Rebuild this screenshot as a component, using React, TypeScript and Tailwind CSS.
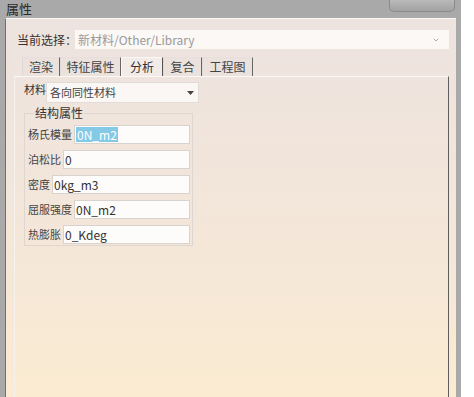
import { ChevronDown } from 'lucide-react';

const font = 'font-["Microsoft_YaHei","Noto_Sans_CJK_SC",sans-serif]';

const tabs = [
  { label: '渲染', w: 'w-[38px]' },
  { label: '特征属性', w: 'w-[61px]' },
  { label: '分析', w: 'w-[42px]', active: true },
  { label: '复合', w: 'w-[39px]' },
  { label: '工程图', w: 'w-[51px]' },
];

const props = [
  { label: '杨氏模量', value: '0N_m2', selected: true },
  { label: '泊松比', value: '0' },
  { label: '密度', value: '0kg_m3' },
  { label: '屈服强度', value: '0N_m2' },
  { label: '热膨胀', value: '0_Kdeg' },
];

function Arrow() {
  return (
    <svg width="7" height="4" viewBox="0 0 7 4" className="shrink-0">
      <path d="M0 0 H7 L3.5 4 Z" fill="#444" />
    </svg>
  );
}

export default function App() {
  return (
    <div className={`flex h-[397px] w-[474px] overflow-hidden bg-white text-[#333] ${font}`}>
      <div className="flex w-[461px] flex-col bg-[#a9a9a9]">
        {/* Title bar */}
        <div className="flex h-[18px] shrink-0 items-start justify-between">
          <span className="pl-[6px] pt-[1px] text-[13px] leading-[16px] text-[#2a2a2a]">属性</span>
          <div className="mr-[6px] h-[12px] w-[66px] rounded-b-[5px] border border-t-0 border-[#8a8a8a] bg-gradient-to-b from-[#b9b9b9] to-[#a2a2a2]" />
        </div>

        {/* Body */}
        <div className="mx-[5px] flex flex-1 flex-col border-l border-t border-l-[#6f6f6f] border-t-[#fbf7f5] bg-gradient-to-b from-[#ede3df] via-[#f3e6da] to-[#faebd1] pl-[8px] pr-[7px]">
          {/* Current selection */}
          <div className="mt-[11px] flex h-[19px] items-center">
            <span className="w-[61px] shrink-0 whitespace-nowrap pl-[3px] text-[12px] text-[#333]">当前选择：</span>
            <div className="flex h-[19px] flex-1 items-center justify-between bg-[#fbf8f6] pl-[3px] pr-[9px]">
              <span className="text-[12px] text-[#9a9a9a]">新材料/Other/Library</span>
              <ChevronDown className="h-[8px] w-[8px] text-[#aaa]" strokeWidth={3} />
            </div>
          </div>

          {/* Tabs */}
          <div className="mt-[8px] flex h-[19px] pl-[8px]">
            {tabs.map((t) => (
              <div
                key={t.label}
                className={`flex ${t.w} items-center justify-center border-l border-r border-t text-[12px] ${
                  t.active
                    ? 'border-l-[#fbf7f5] border-r-[#555] border-t-[#fbf7f5] bg-[#f3ebe7] text-[#333]'
                    : 'border-l-[#e0d8d4] border-r-[#666] border-t-[#e7dfdb] bg-[#ebe2de] text-[#444]'
                }`}
              >
                {t.label}
              </div>
            ))}
          </div>

          {/* Tab panel */}
          <div className="flex flex-1 flex-col border-l border-r border-t border-l-[#f7f1ee] border-r-[#5d5d5d] border-t-[#fbf8f6] pl-[9px]">
            <div className="mt-[5px] flex h-[21px] items-start">
              <span className="pt-[1px] text-[11px] leading-[13px] text-[#333]">材料</span>
              <div className="flex h-[21px] w-[153px] items-center justify-between border border-[#e2dcd8] bg-[#faf7f5] pl-[3px] pr-[4px]">
                <span className="text-[11px] text-[#444]">各向同性材料</span>
                <Arrow />
              </div>
            </div>

            <fieldset className="mt-[3px] w-[169px] border border-[#ddd6d1] pb-[1px] pl-[3px] pr-[2px]">
              <legend className="ml-[6px] px-[1px] text-[12px] leading-[14px] text-[#333]">结构属性</legend>
              <div className="mt-[5px] flex flex-col gap-[6px]">
                {props.map((p) => (
                  <div key={p.label} className="flex h-[19px] items-center gap-[2px]">
                    <span className="whitespace-nowrap text-[11px] text-[#444]">{p.label}</span>
                    <div className="flex h-[19px] flex-1 items-center border border-[#d8d3cf] bg-[#fdfcfb] pl-[1px]">
                      <span
                        className={`text-[12px] leading-[15px] ${
                          p.selected ? 'bg-[#84c9e6] px-[1px] text-white' : 'text-[#333]'
                        }`}
                      >
                        {p.value}
                      </span>
                    </div>
                  </div>
                ))}
              </div>
            </fieldset>
          </div>
        </div>
      </div>
    </div>
  );
}
